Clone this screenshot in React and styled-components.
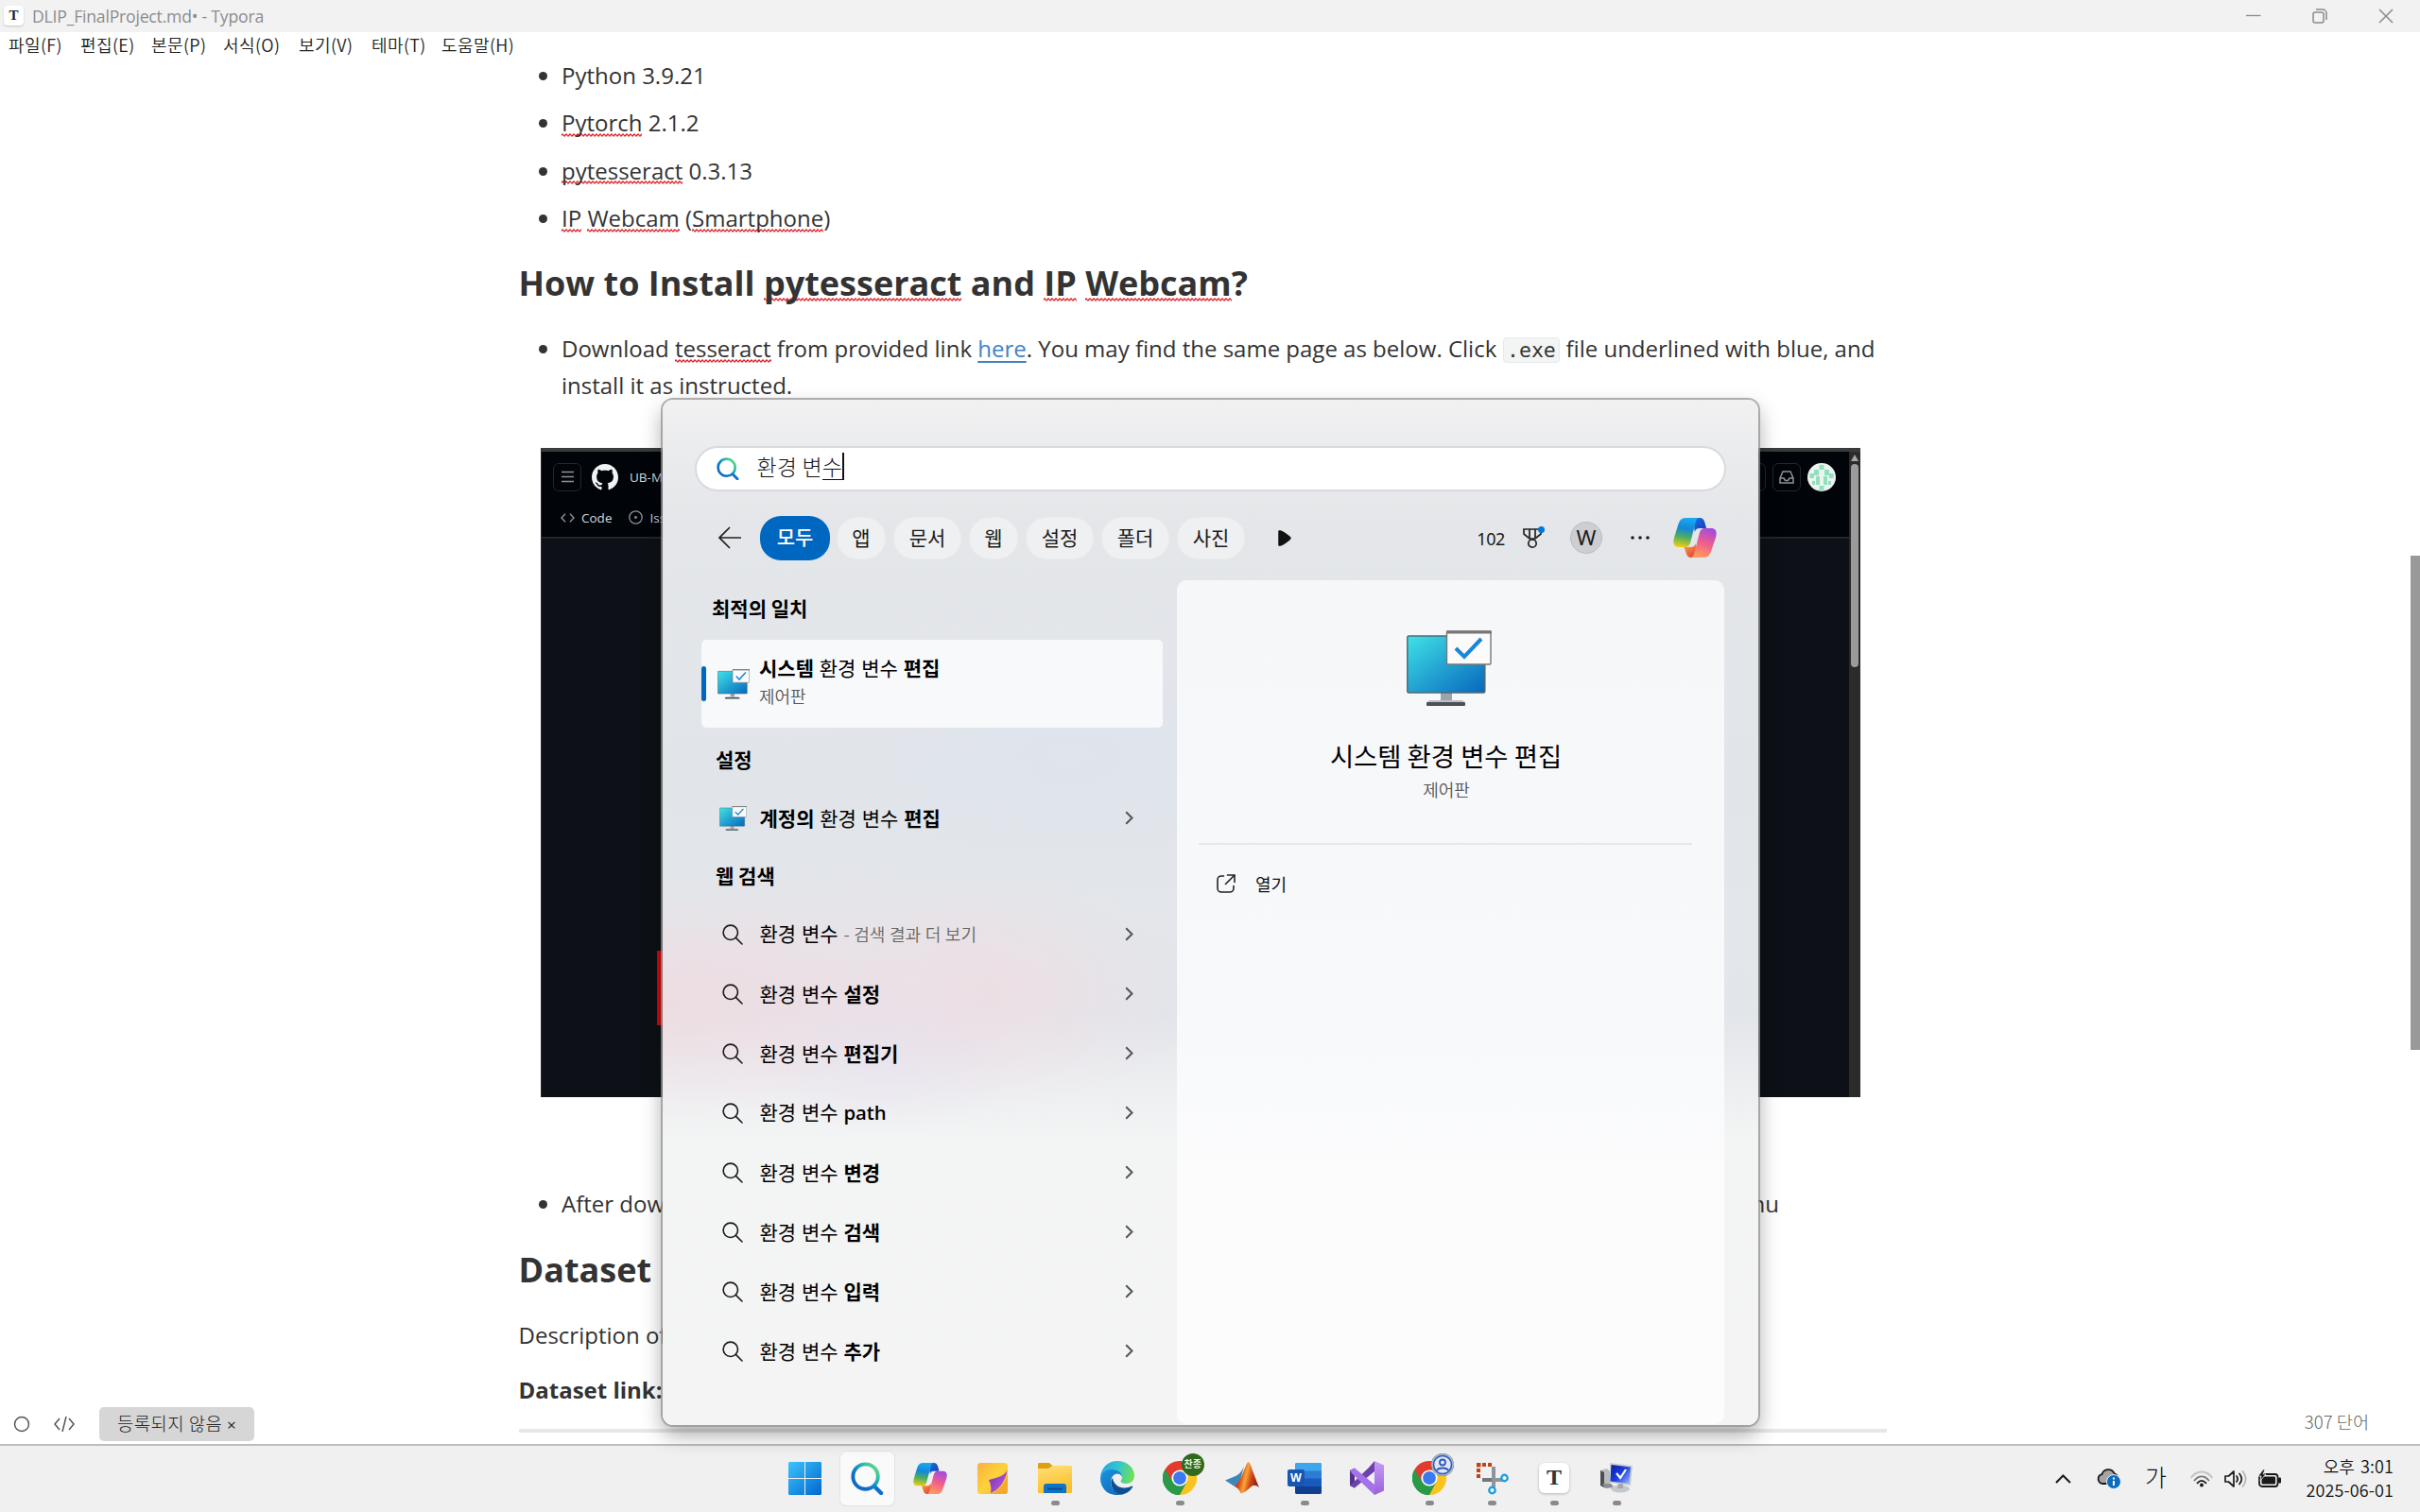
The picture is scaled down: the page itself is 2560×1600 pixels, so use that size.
import React from 'react';
import styled, { createGlobalStyle, css } from 'styled-components';

const UI = `"Noto Sans CJK KR", "Open Sans", sans-serif`;

const Global = createGlobalStyle`
  * { box-sizing: border-box; }
  html, body { margin: 0; padding: 0; overflow: hidden; }
  body { font-family: ${UI}; background: #fff; }
  svg { display: block; flex: none; }
`;

/* ---------- desktop shell ---------- */
const Desktop = styled.div`
  position: relative;
  width: 2560px;
  height: 1600px;
  display: flex;
  flex-direction: column;
  overflow: hidden;
  background: #fff;
`;

const TitleBar = styled.div`
  flex: none;
  height: 34px;
  background: #f2f2f2;
  display: flex;
  align-items: center;
  padding: 0 28px 1px 4px;
`;
const TitleIcon = styled.div`
  width: 21px;
  height: 21px;
  border-radius: 4px;
  background: #fff;
  box-shadow: 0 1px 2px rgba(0, 0, 0, 0.2);
  font: bold 15px/21px "Liberation Serif", serif;
  text-align: center;
  color: #222;
`;
const TitleText = styled.div`
  margin-left: 9px;
  font: 17.6px/34px "Open Sans", sans-serif;
  letter-spacing: -0.2px;
  color: #8c8c8c;
`;
const WindowButtons = styled.div`
  margin-left: auto;
  display: flex;
  gap: 54px;
`;

const MenuBar = styled.div`
  flex: none;
  height: 27px;
  display: flex;
  align-items: center;
  padding-left: 9px;
`;
const MenuItem = styled.div`
  width: ${(p) => p.$w}px;
  font: 350 18px/27px ${UI};
  letter-spacing: 0.4px;
  color: #222;
  white-space: nowrap;
`;

const Editor = styled.div`
  flex: 1;
  min-height: 0;
  position: relative;
  overflow: hidden;
`;
const Page = styled.div`
  width: 1447px;
  margin-left: 548.5px;
  font: 24px/38.8px "Open Sans", "Noto Sans CJK KR", sans-serif;
  color: #333;
`;
const List = styled.ul`
  margin: 0;
  padding: 0 0 0 45.5px;
  list-style: none;
`;
const Item = styled.li`
  position: relative;
  margin-bottom: ${(p) => (p.$last ? 0 : 11.6)}px;
  white-space: nowrap;
  &::before {
    content: '';
    position: absolute;
    left: -24px;
    top: 15px;
    width: 9px;
    height: 9px;
    border-radius: 50%;
    background: #333;
  }
`;
const SplitItem = styled(Item)`
  width: 1288px;
  display: flex;
  justify-content: space-between;
`;
const Heading = styled.h3`
  margin: ${(p) => p.$top}px 0 24px;
  font: bold 36px/52px "Open Sans", sans-serif;
  white-space: nowrap;
`;
const Para = styled.p`
  margin: 0 0 ${(p) => (p.$bold ? 21 : 19)}px;
  font-weight: ${(p) => (p.$bold ? 700 : 400)};
`;
const Typo = styled.span`
  background: url("data:image/svg+xml,%3Csvg xmlns='http://www.w3.org/2000/svg' width='4' height='3.500' viewBox='0 0 4 3.500'%3E%3Cpath d='M-1 3.400L1 .9 3 2.900 5 .4' transform='translate(0 -.2)' fill='none' stroke='%23e01b22' stroke-width='1.100'/%3E%3C/svg%3E")
    repeat-x 0 calc(1.069em + 2px) / 4px 3.5px;
`;
const Link = styled.a`
  color: #4183c4;
  text-decoration: underline;
  text-underline-offset: 4px;
  text-decoration-thickness: 2px;
`;
const Code = styled.code`
  font: 21.5px/24px "DejaVu Sans Mono", "Liberation Mono", monospace;
  background: #f3f4f4;
  border: 1px solid #e7eaed;
  border-radius: 4px;
  padding: 0 3.5px;
`;
const Rule = styled.div`
  height: 4px;
  margin-top: 6px;
  background: #e7e7e7;
`;
const PageScroll = styled.div`
  position: absolute;
  right: 0;
  top: 527px;
  width: 10px;
  height: 523px;
  background: #999;
`;

/* ---------- embedded dark web page ---------- */
const Shot = styled.div`
  width: 1396px;
  height: 687px;
  margin: 46px 0 94.500px 23.500px;
  display: flex;
  border-top: 4px solid #3a3b3d;
  border-left: 1px solid #2a2d31;
  background: #0d1117;
`;
const ShotMain = styled.div`
  flex: 1;
  display: flex;
  flex-direction: column;
`;
const ShotHead = styled.div`
  height: 92px;
  background: #010409;
  border-bottom: 2px solid #22262d;
  padding: 12px 14px 0 12px;
  color: #d5d9de;
  font: 500 13.500px/16px "Open Sans", sans-serif;
`;
const ShotRow = styled.div`
  display: flex;
  align-items: center;
  height: ${(p) => p.$h}px;
  gap: ${(p) => p.$gap || 0}px;
  padding-left: ${(p) => p.$pad || 0}px;
  margin-top: ${(p) => p.$mt || 0}px;
`;
const ShotButton = styled.div`
  width: 30px;
  height: 30px;
  border: 1px solid #23272e;
  border-radius: 6px;
  display: flex;
  align-items: center;
  justify-content: center;
  margin-left: ${(p) => (p.$end ? 'auto' : 0)};
`;
const ShotScroll = styled.div`
  width: 12px;
  background: #2b2b2c;
  display: flex;
  flex-direction: column;
  align-items: center;
  padding-top: 3px;
`;
const ShotThumb = styled.div`
  margin-top: 3px;
  width: 8px;
  height: 215px;
  border-radius: 4px;
  background: #9b9b9b;
`;
const RedMark = styled.div`
  width: 20px;
  height: 79px;
  margin: 436px 0 0 122px;
  background: #d0060b;
`;

/* ---------- status bar ---------- */
const StatusBar = styled.div`
  position: absolute;
  left: 0;
  right: 0;
  bottom: 0;
  height: 43px;
  display: flex;
  align-items: center;
  padding: 0 54px 0 14px;
  font: 300 18.800px/34px ${UI};
  color: #444;
`;
const Pill = styled.div`
  width: 164px;
  height: 36px;
  margin: 0 0 0 26px;
  border-radius: 5px;
  background: #d6d6d6;
  color: #222;
  letter-spacing: 0.500px;
  text-align: center;
  white-space: nowrap;
  span { font-family: "Open Sans", sans-serif; font-weight: 400; font-size: 17px; }
`;
const Words = styled.div`
  margin-left: auto;
  font-size: 18.600px;
  color: #666;
  margin-top: -5px;
`;

/* ---------- search flyout ---------- */
const Flyout = styled.div`
  position: absolute;
  left: 701px;
  top: 423px;
  width: 1159px;
  height: 1085px;
  border-radius: 11px;
  overflow: hidden;
  box-shadow: 0 0 0 2px rgba(150, 150, 150, 0.75), 0 10px 22px rgba(0, 0, 0, 0.35);
  background:
    radial-gradient(ellipse 240px 120px at 0px 640px, rgba(248, 210, 214, 0.35), transparent),
    radial-gradient(ellipse 150px 120px at 350px 625px, rgba(246, 216, 219, 0.3), transparent),
    radial-gradient(ellipse 400px 135px at 200px 625px, rgba(240, 222, 229, 0.6), transparent),
    radial-gradient(ellipse 140px 90px at 240px 690px, rgba(226, 222, 244, 0.4), transparent),
    radial-gradient(ellipse 260px 130px at 430px 375px, rgba(220, 226, 241, 0.4), transparent),
    linear-gradient(180deg, #f1f1f1 0, #ebecee 50px, #e4e6e9 130px, #e1e5ea 400px, #e3e6ea 560px, #e2e5ea 650px, #ebecef 710px, #f3f4f4 780px, #f4f4f4 1085px);
  padding: 50.5px 36px 0 35px;
`;
const SearchBox = styled.div`
  height: 44px;
  margin-left: 1px;
  width: 1087px;
  border-radius: 22px;
  background: #fff;
  box-shadow: 0 0 0 2px #d9dadd;
  display: flex;
  align-items: center;
  padding-left: 21px;
`;
const Query = styled.div`
  margin: -5px 0 0 18.5px;
  font: 300 23px/28px ${UI};
  word-spacing: 0.7px;
  color: #111;
  display: flex;
  white-space: pre;
`;
const Composing = styled.span`
  border-bottom: 1.5px solid #111;
  border-right: 2px solid #111;
`;
const Tabs = styled.div`
  display: flex;
  align-items: center;
  height: 47px;
  margin-top: 28px;
  padding-left: 23px;
`;
const Tab = styled.div`
  width: ${(p) => p.$w}px;
  height: 45px;
  margin-right: 8px;
  border-radius: 22px;
  background: #eff0f1;
  border: 1px solid #ebecee;
  color: #1a1a1a;
  font: 400 21px/40px ${UI};
  text-align: center;
  ${(p) =>
    p.$on &&
    css`
      height: 47px;
      margin-right: 7px;
      border: 0;
      line-height: 43px;
      background: #0067c0;
      color: #fff;
      font-weight: 500;
    `}
`;
const Spacer = styled.div`
  width: ${(p) => p.$w}px;
  flex: none;
`;
const Points = styled.div`
  margin-left: auto;
  font: 18px/24px "Noto Sans", sans-serif;
  letter-spacing: -0.4px;
  color: #1a1a1a;
  padding-top: 1px;
`;
const Avatar = styled.div`
  width: 34px;
  height: 34px;
  margin: 0 29px 0 27px;
  border-radius: 50%;
  background: #cdced1;
  border: 1.5px solid #bcbdc0;
  font: 22.5px/31px "Noto Sans", sans-serif;
  text-align: center;
  color: #1a1a1a;
`;
const Columns = styled.div`
  display: flex;
  margin-top: 21.5px;
  height: 893px;
`;
const Results = styled.div`
  width: 509px;
  flex: none;
  padding-left: 6px;
`;
const GroupTitle = styled.div`
  height: ${(p) => p.$h}px;
  padding-left: ${(p) => p.$pad}px;
  font: 700 21px/${(p) => p.$line}px ${UI};
  color: #000;
`;
const BestMatch = styled.div`
  width: 488px;
  height: 93px;
  border-radius: 5px;
  background: #f8f9fb;
  display: flex;
  align-items: center;
`;
const Accent = styled.div`
  width: 5px;
  height: 37px;
  border-radius: 3px;
  background: #0067c0;
`;
const Label = styled.div`
  font: 400 21px/28px ${UI};
  word-spacing: 1.1px;
  margin-top: -2px;
  color: #000;
  white-space: pre;
  b { font-weight: 700; }
  small { font-size: 18px; color: #666; font-weight: 350; word-spacing: 0.6px; }
`;
const Latin = styled.b`
  && { font-family: "Open Sans", sans-serif; font-weight: 600; font-size: 20.3px; }
`;
const Sub = styled.div`
  font: 350 18px/26px ${UI};
  color: #555;
`;
const BestText = styled.div`
  margin: -4px 0 0 10px;
  ${Sub} { margin-top: 3px; }
`;
const Row = styled.div`
  height: 63px;
  width: 488px;
  display: flex;
  align-items: center;
  padding: 0 31px 0 19px;
  & > :last-child { margin-left: auto; }
`;
const RowIcon = styled.div`
  width: 42.5px;
  padding-left: ${(p) => p.$pad || 0}px;
  flex: none;
`;
const Details = styled.div`
  width: 579px;
  border-radius: 10px;
  background: linear-gradient(180deg, #f6f7f9 0, #f8f9fb 480px, #fcfcfd 640px, #fcfcfc 100%);
  display: flex;
  flex-direction: column;
  align-items: center;
  padding-top: 53px;
  & > svg { margin-right: 3px; }
`;
const DetailsTitle = styled.div`
  margin: 31px 10px 0 0;
  font: 400 27.4px/40px ${UI};
  color: #000;
`;
const DetailsSub = styled(Sub)`
  margin: 2.5px 9px 0 0;
`;
const Divider = styled.div`
  width: 522px;
  height: 2px;
  margin: 44px 11px 0 0;
  background: #e6e7e8;
`;
const Action = styled.div`
  align-self: flex-start;
  display: flex;
  align-items: center;
  gap: 21px;
  margin: 26px 0 0 42px;
  font: 400 18px/30px ${UI};
  color: #111;
`;

/* ---------- taskbar ---------- */
const Taskbar = styled.div`
  flex: none;
  height: 72px;
  border-top: 2px solid #bdbdbd;
  background: #f0f0f1;
  display: flex;
  padding: 0 29px 0 818.5px;
  position: relative;
`;
const Slot = styled.div`
  width: 66.05px;
  height: 68px;
  display: flex;
  align-items: center;
  justify-content: center;
  position: relative;
  ${(p) =>
    p.$open &&
    css`
      &::after {
        content: '';
        position: absolute;
        left: 29px;
        bottom: 5px;
        width: 9px;
        height: 5px;
        border-radius: 3px;
        background: #8a8a8a;
      }
    `}
`;
const Active = styled.div`
  width: 57px;
  height: 57px;
  border-radius: 6px;
  background: #fafafa;
  box-shadow: 0 0 0 1px #e3e3e3, 0 1px 1px #ccc;
  display: flex;
  align-items: center;
  justify-content: center;
`;
const Badge = styled.div`
  position: absolute;
  left: 35px;
  top: 8px;
  width: 24px;
  height: 24px;
  border-radius: 50%;
  overflow: hidden;
  background: #2f6b1e;
  color: #e6f3de;
  font: 700 10px/22px ${UI};
  text-align: center;
`;
const TyporaTile = styled.div`
  width: 32px;
  height: 32px;
  border-radius: 6px;
  background: #fff;
  box-shadow: 0 1px 3px rgba(0, 0, 0, 0.25);
  font: bold 24px/31px "Liberation Serif", serif;
  color: #333;
  text-align: center;
`;
const Tray = styled.div`
  margin-left: auto;
  display: flex;
  align-items: center;
  height: 69px;
`;
const Ime = styled.div`
  margin: -5px 26px 0 25px;
  width: 22px;
  font: 300 25px/32px ${UI};
  color: #111;
`;
const Clock = styled.div`
  width: 119px;
  margin: -2px -1px 0 0;
  text-align: right;
  font: 350 18px/25px ${UI};
  letter-spacing: 0.1px;
  word-spacing: 2px;
  color: #111;
`;

/* ---------- icons ---------- */
const MonitorIcon = ({ w, h, id }) => (
  <svg width={w} height={h} viewBox="0 0 90 81" preserveAspectRatio="none">
    <defs>
      <linearGradient id={id} x1="0" y1="0" x2="1" y2="1">
        <stop offset="0" stopColor="#3fe3e6" />
        <stop offset="0.5" stopColor="#23a3d2" />
        <stop offset="1" stopColor="#0767bd" />
      </linearGradient>
    </defs>
    <rect x="36" y="66" width="12" height="10" fill="#9aa4ad" />
    <path d="M24 74h35l3 3H21z" fill="#b9c0c6" />
    <rect x="21" y="76" width="41" height="4" rx="1" fill="#4b5157" />
    <rect x="0.8" y="6" width="82" height="60" rx="1.5" fill={`url(#${id})`} stroke="#4f6b78" strokeWidth="1.5" />
    <rect x="42.500" y="1" width="46.500" height="35" rx="1" fill="#fbfbfb" stroke="#777" strokeWidth="1.4" />
    <rect x="42" y="0.500" width="48" height="3" fill="#777" />
    <path d="M52 19l9 9 18-19" fill="none" stroke="#1886d9" strokeWidth="4" />
  </svg>
);

const Lens = ({ size, stroke, w }) => (
  <svg width={size} height={size} viewBox="0 0 22 22" fill="none" stroke={stroke} strokeWidth={w} strokeLinecap="round">
    <circle cx="8.800" cy="8.800" r="7.700" />
    <path d="M14.400 14.400L21 21" />
  </svg>
);

const ColorLens = ({ size, id }) => (
  <svg width={size} height={size} viewBox="0 0 36 36" fill="none">
    <defs>
      <linearGradient id={id} x1="0.950" y1="0.050" x2="0.300" y2="0.700">
        <stop offset="0" stopColor="#66e07a" />
        <stop offset="0.350" stopColor="#33bfa6" />
        <stop offset="0.750" stopColor="#0c86cf" />
        <stop offset="1" stopColor="#0f6cc4" />
      </linearGradient>
    </defs>
    <path d="M25.500 26.500L33 34" stroke="#0f6fca" strokeWidth="4.400" strokeLinecap="round" />
    <circle cx="16" cy="16" r="13.600" stroke={`url(#${id})`} strokeWidth="4" />
  </svg>
);

const Chevron = () => (
  <svg width="9" height="15" viewBox="0 0 9 15" fill="none" stroke="#555" strokeWidth="2">
    <path d="M1.200 1.200L7.500 7.500 1.200 13.800" />
  </svg>
);

const Copilot = ({ w, h, id }) => (
  <svg width={w} height={h} viewBox="0 0 46 42" preserveAspectRatio="none">
    <defs>
      <linearGradient id={`${id}a`} x1="0.400" y1="0" x2="0.250" y2="1">
        <stop offset="0" stopColor="#18a8f0" />
        <stop offset="0.350" stopColor="#1587d8" />
        <stop offset="0.650" stopColor="#4fb05c" />
        <stop offset="1" stopColor="#f9cc12" />
      </linearGradient>
      <linearGradient id={`${id}b`} x1="0.700" y1="0" x2="0.400" y2="1">
        <stop offset="0" stopColor="#a04be0" />
        <stop offset="0.500" stopColor="#ef5d8e" />
        <stop offset="1" stopColor="#ff9a5c" />
      </linearGradient>
      <linearGradient id={`${id}c`} x1="0" y1="0" x2="1" y2="1">
        <stop offset="0" stopColor="#1279dd" />
        <stop offset="1" stopColor="#2330b8" />
      </linearGradient>
      <linearGradient id={`${id}d`} x1="0" y1="0" x2="0.600" y2="1">
        <stop offset="0" stopColor="#f7a93a" />
        <stop offset="1" stopColor="#e9473c" />
      </linearGradient>
    </defs>
    <path d="M21 0h7c3 0 4.500 2 5.300 4.600L35 11h-7c-3 0-4.400 1.600-5.200 4z" fill={`url(#${id}c)`} />
    <path d="M25 42h-6c-3 0-4.500-2-5.200-4.600L11.500 31h7c3 0 4.400-1.600 5.200-4z" fill={`url(#${id}d)`} />
    <path d="M27 0H13C8 0 6.200 4 5 8L1 21c-1.600 5.500-.6 10 4.800 10h6.500c3.500 0 5-2 5.900-5l5.200-20c.7-3 1.600-5.600 3.600-6z" fill={`url(#${id}a)`} />
    <path d="M19 42h13.500c5 0 6.800-4 8-8L45 21c1.600-5.500.6-10-4.800-10h-6.500c-3.500 0-5 2-5.900 5L22.600 36c-.7 3-1.600 5.600-3.600 6z" fill={`url(#${id}b)`} />
  </svg>
);

const Windows = () => (
  <svg width="35" height="35" viewBox="0 0 35 35">
    <defs>
      <linearGradient id="win" gradientUnits="userSpaceOnUse" x1="0" y1="0" x2="35" y2="35">
        <stop offset="0" stopColor="#3cc4fb" />
        <stop offset="1" stopColor="#0067cf" />
      </linearGradient>
    </defs>
    <path fill="url(#win)" d="M1 0h16v17H0V1zM18 0h16l1 1v16H18zM0 18h17v17H1l-1-1zM18 18h17v16l-1 1H18z" />
  </svg>
);

const StickyNote = () => (
  <svg width="32" height="33" viewBox="0 0 32 33">
    <defs>
      <linearGradient id="st1" x1="0" y1="0" x2="1" y2="1">
        <stop offset="0" stopColor="#fbb040" />
        <stop offset="0.500" stopColor="#fdd23a" />
        <stop offset="1" stopColor="#f9b52c" />
      </linearGradient>
      <linearGradient id="st2" x1="0" y1="0" x2="1" y2="1">
        <stop offset="0" stopColor="#7d2fb8" />
        <stop offset="1" stopColor="#b660e0" />
      </linearGradient>
    </defs>
    <rect width="32" height="33" rx="3.500" fill="url(#st1)" />
    <path d="M31.500 8c-4 6-8 7-19.500 10 2 4 3 9 2 14 8-3 15.500-12 17.500-24z" fill="url(#st2)" />
    <path d="M14 33c8-3 16-11 18-22v18.500a3.500 3.500 0 0 1-3.500 3.500z" fill="#f4a92c" />
  </svg>
);

const Folder = () => (
  <svg width="36" height="33" viewBox="0 0 36 33">
    <defs>
      <linearGradient id="fo" x1="0" y1="0" x2="0.300" y2="1">
        <stop offset="0" stopColor="#ffe07a" />
        <stop offset="1" stopColor="#fbc02a" />
      </linearGradient>
    </defs>
    <path d="M0 1.500C0 .6.600 0 1.500 0H12l4 3.500-4 4H0z" fill="#dca010" />
    <path d="M0 6h11l4.500-3H34.500c.9 0 1.500.6 1.500 1.500V32H0z" fill="url(#fo)" />
    <path d="M6 32v-7c0-2 1-3 3-3h18c2 0 3 1 3 3v7z" fill="#1173c8" />
    <path d="M11 27.500h14" stroke="#0a4f96" strokeWidth="2" strokeLinecap="round" />
  </svg>
);

const Edge = () => (
  <svg width="36" height="36" viewBox="0 0 36 36">
    <defs>
      <linearGradient id="ed1" x1="0" y1="0.300" x2="1" y2="0.500">
        <stop offset="0" stopColor="#2aa5e6" />
        <stop offset="0.500" stopColor="#33c6cf" />
        <stop offset="1" stopColor="#6fe052" />
      </linearGradient>
      <linearGradient id="ed2" x1="0" y1="0" x2="0.700" y2="1">
        <stop offset="0" stopColor="#1c94de" />
        <stop offset="1" stopColor="#0f6cbf" />
      </linearGradient>
    </defs>
    <path d="M0 17C1 7 8 0 18 0c10.500 0 18 7.500 18 15.500 0 5-4 8.500-8.500 8.500-4 0-6-1.400-6-2.600 0-1 1.500-1.600 1.500-4.400 0-3-2.600-5.500-6-5.500C9 11.500 2 13 0 17z" fill="url(#ed1)" />
    <path d="M0 18C1 12 7 9 12 9c7 0 11 4 11 8-1-2.500-3-3.500-5-3.500-4 0-7 4-7 9 0 6 5 12.500 10 13.400C8 37.500 0 29 0 18z" fill="url(#ed2)" />
    <path d="M11.500 20c-1.500 7 4 15.800 10 15.800 5.500-.6 10-3.600 12.600-8 .5-.9-.3-1.500-1.200-1C24 30.800 14.500 27.500 13 18z" fill="#0d4f96" />
  </svg>
);

const Chrome = () => (
  <svg width="36" height="36" viewBox="0 0 36 36">
    <path d="M18 18L2.400 9A18 18 0 0 1 33.600 9z" fill="#e33b2e" />
    <path d="M18 18L33.600 9A18 18 0 0 1 18 36z" fill="#fcc31e" />
    <path d="M18 18L18 36A18 18 0 0 1 2.400 9z" fill="#2a9a48" />
    <path d="M18 9.500H33.800L25.500 22.500z" fill="#fcc31e" />
    <path d="M10.500 22.200L2.400 9 18 9.500z" fill="#e33b2e" />
    <path d="M2.400 9L11 23.500 18 26 25.500 22.200 18 36A18 18 0 0 1 2.400 9z" fill="#2a9a48" />
    <circle cx="18" cy="18" r="8.600" fill="#fff" />
    <circle cx="18" cy="18" r="6.900" fill="#3a7af0" />
  </svg>
);

const Matlab = () => (
  <svg width="36" height="34" viewBox="0 0 36 34">
    <defs>
      <linearGradient id="ma" x1="0" y1="0" x2="1" y2="0.300">
        <stop offset="0" stopColor="#7c1f12" />
        <stop offset="0.350" stopColor="#d8481a" />
        <stop offset="0.550" stopColor="#f8a63a" />
        <stop offset="0.750" stopColor="#d24a17" />
        <stop offset="1" stopColor="#8f2413" />
      </linearGradient>
    </defs>
    <path d="M0 19.500l11-4.500c4-1.500 7-6 9-10l-5 17.500-5 3.500z" fill="#3d87b9" />
    <path d="M10 26c5-4 9-15 12-22 1.500-4 3-5 4.500-2C29 9 33 20 36 27c-3-2-5-3-7.500-1.500C24 29 22 32 17 33.500c-2-3-3-6-7-7.500z" fill="url(#ma)" />
  </svg>
);

const WordTile = styled.div`
  position: relative;
  width: 36px;
  height: 33px;
`;
const WordLetter = styled.div`
  position: absolute;
  left: 0;
  top: 7px;
  width: 18px;
  height: 18px;
  border-radius: 2px;
  background: #1757b3;
  color: #fff;
  font: bold 12.5px/18px "Liberation Sans", sans-serif;
  text-align: center;
`;
const Word = () => (
  <WordTile>
    <svg width="36" height="33" viewBox="0 0 36 33">
      <rect x="8" y="0" width="28" height="33" rx="2" fill="#2b7cd3" />
      <path d="M8 2a2 2 0 0 1 2-2h24a2 2 0 0 1 2 2v6.500H8z" fill="#41a5ee" />
      <path d="M8 16.500h28V25H8z" fill="#185abd" />
      <path d="M8 25h28v6a2 2 0 0 1-2 2H10a2 2 0 0 1-2-2z" fill="#103f91" />
    </svg>
    <WordLetter>W</WordLetter>
  </WordTile>
);

const VisualStudio = () => (
  <svg width="36" height="36" viewBox="0 0 36 36">
    <defs>
      <linearGradient id="vs" x1="0" y1="0" x2="0" y2="1">
        <stop offset="0" stopColor="#c79bf5" />
        <stop offset="1" stopColor="#9a62dc" />
      </linearGradient>
    </defs>
    <path d="M0 10l5-2.500v21L0 26z" fill="#55308c" />
    <path d="M26 0v11L5 28.500 0 26 20 7z" fill="#6d42ad" />
    <path d="M0 10l5-2.500L26 25v11L2 13z" fill="#a672e8" />
    <path d="M26 0l10 4.500v27L26 36z" fill="url(#vs)" />
  </svg>
);

const Snip = () => (
  <svg width="35" height="35" viewBox="0 0 35 35">
    <g fill="#c2421a">
      <path d="M1 1h4.500v4.500H1zM7 1h4v4H7zM13 1h4v4h-4zM1 7h4v4H1zM1 13h4v4H1z" />
    </g>
    <path d="M19 5v22M7 19h22" stroke="#8d949b" strokeWidth="4" />
    <path d="M7 17h10v4H7z" fill="#70777e" />
    <circle cx="30.500" cy="17" r="3.200" fill="#fff" stroke="#1e9fe0" strokeWidth="2.400" />
    <circle cx="17.500" cy="30" r="3.200" fill="#fff" stroke="#1e9fe0" strokeWidth="2.400" />
  </svg>
);

const OldPc = () => (
  <svg width="36" height="32" viewBox="0 0 36 32">
    <defs>
      <linearGradient id="pc" x1="0" y1="0" x2="1" y2="0.800">
        <stop offset="0" stopColor="#0a1d9a" />
        <stop offset="0.550" stopColor="#1c3fe0" />
        <stop offset="1" stopColor="#8aa6f5" />
      </linearGradient>
    </defs>
    <path d="M1 8l7-2 3 3v15l-6 2-4-2z" fill="#b8bcbf" />
    <path d="M1 8l4 2v16l-4-2z" fill="#4b4f52" />
    <path d="M3 22h9l4 4-10 1z" fill="#8a8e91" />
    <path d="M11 0l24 3-2 21-22-3z" fill="#c9cdd1" />
    <path d="M12.500 2l20.500 2.500-1.600 17.500L11.500 19.500z" fill="url(#pc)" />
    <path d="M18 11l4 5 6-9" fill="none" stroke="#fff" strokeWidth="2.200" />
    <ellipse cx="22" cy="27.500" rx="10" ry="4" fill="#c4c8cc" />
    <path d="M20 22h5v5h-6z" fill="#a4a8ab" />
  </svg>
);

const ProfileBadge = () => (
  <svg width="24" height="24" viewBox="0 0 24 24" fill="none">
    <circle cx="12" cy="12" r="12" fill="#a9b5d6" />
    <circle cx="12" cy="12" r="9.500" stroke="#2f58b8" strokeWidth="1.600" fill="#dfe6f7" />
    <circle cx="12" cy="9.500" r="3" stroke="#2f58b8" strokeWidth="1.800" />
    <path d="M6 18c1.500-3.500 10.500-3.500 12 0" stroke="#2f58b8" strokeWidth="2" />
  </svg>
);

const GitHubMark = () => (
  <svg width="28" height="28" viewBox="0 0 16 16" fill="#f0f3f6">
    <path d="M8 0C3.580 0 0 3.580 0 8c0 3.540 2.290 6.530 5.470 7.590.4.070.55-.17.55-.38 0-.19-.01-.82-.01-1.490-2.010.37-2.530-.49-2.690-.94-.09-.23-.48-.94-.82-1.130-.28-.15-.68-.52-.01-.53.63-.01 1.080.58 1.230.82.72 1.210 1.870.87 2.330.66.07-.52.28-.87.51-1.070-1.780-.2-3.640-.89-3.640-3.950 0-.87.31-1.590.82-2.150-.08-.2-.36-1.020.08-2.120 0 0 .67-.21 2.200.82.64-.18 1.320-.27 2-.27s1.360.09 2 .27c1.530-1.040 2.200-.82 2.200-.82.44 1.100.16 1.920.08 2.120.51.56.82 1.270.82 2.150 0 3.070-1.870 3.750-3.650 3.950.29.25.54.73.54 1.480 0 1.070-.01 1.930-.01 2.200 0 .21.15.46.55.38A8.010 8.010 0 0 0 16 8c0-4.420-3.580-8-8-8z" />
  </svg>
);

const suggestions = ['설정', '편집기', 'path', '변경', '검색', '입력', '추가'];
const tabs = [
  ['앱', 52],
  ['문서', 72],
  ['웹', 52],
  ['설정', 72],
  ['폴더', 72],
  ['사진', 72],
];
const menus = [
  ['파일(F)', 76],
  ['편집(E)', 75],
  ['본문(P)', 76],
  ['서식(O)', 80],
  ['보기(V)', 77],
  ['테마(T)', 74],
  ['도움말(H)', 90],
];

function WebShot() {
  return (
    <Shot>
      <ShotMain>
        <ShotHead>
          <ShotRow $h={30}>
            <ShotButton>
              <svg width="13" height="13" viewBox="0 0 13 13" stroke="#8b929a" strokeWidth="1.400">
                <path d="M0 1.500h13M0 6.500h13M0 11.500h13" />
              </svg>
            </ShotButton>
            <Spacer $w={11} />
            <GitHubMark />
            <Spacer $w={12} />
            UB-Mannheim
            <ShotButton $end />
            <Spacer $w={7} />
            <ShotButton>
              <svg width="16" height="14" viewBox="0 0 16 14" fill="none" stroke="#8b929a" strokeWidth="1.500">
                <path d="M1 8l3-7h8l3 7v5H1zM1 8h4l1.500 2.500h3L11 8h4" />
              </svg>
            </ShotButton>
            <Spacer $w={7} />
            <svg width="30" height="30" viewBox="0 0 30 30">
              <circle cx="15" cy="15" r="15" fill="#eef3f0" />
              <path fill="#8fe0bd" d="M12.500 2h5v5h-5zM7 7h5v6H7zM18 7h5v6h-5zM2.500 11h4.500v5H2.500zM23 11h4.500v5H23zM9 14h4v9H9zM17 14h4v9h-4zM12.500 24h5v5h-5zM5 19h3v4H5zM22 19h3v4h-3z" />
            </svg>
          </ShotRow>
          <ShotRow $h={20} $gap={7} $pad={8} $mt={18}>
            <svg width="15" height="10" viewBox="0 0 15 10" fill="none" stroke="#8b929a" strokeWidth="1.400">
              <path d="M5 .8L1 5l4 4.200M10 .8L14 5l-4 4.200" />
            </svg>
            <span>Code</span>
            <Spacer $w={4} />
            <svg width="15" height="15" viewBox="0 0 15 15" fill="none" stroke="#8b929a" strokeWidth="1.300">
              <circle cx="7.500" cy="7.500" r="6.700" />
              <circle cx="7.500" cy="7.500" r="0.800" />
            </svg>
            <span>Issues</span>
          </ShotRow>
        </ShotHead>
        <RedMark />
      </ShotMain>
      <ShotScroll>
        <svg width="8" height="7" viewBox="0 0 8 7">
          <path d="M4 0l4 7H0z" fill="#a5a5a5" />
        </svg>
        <ShotThumb />
      </ShotScroll>
    </Shot>
  );
}

function SearchFlyout() {
  return (
    <Flyout>
      <SearchBox>
        <ColorLens size={24} id="lensS" />
        <Query>
          환경 변<Composing>수</Composing>
        </Query>
      </SearchBox>
      <Tabs>
        <svg width="25" height="24" viewBox="0 0 25 24" fill="none" stroke="#222" strokeWidth="1.700">
          <path d="M13 1L2 12l11 11M2 12h23" />
        </svg>
        <Spacer $w={20} />
        <Tab $on $w={74}>모두</Tab>
        {tabs.map(([t, w]) => (
          <Tab key={t} $w={w}>{t}</Tab>
        ))}
        <Spacer $w={27} />
        <svg width="14" height="17" viewBox="0 0 14 17">
          <path d="M1 1h1.500c1 0 10.500 6 10.500 7.500S3.500 16 2.500 16H1z" fill="#111" stroke="#111" strokeWidth="1.500" strokeLinejoin="round" />
        </svg>
        <Points>102</Points>
        <Spacer $w={18} />
        <svg width="24" height="24" viewBox="0 0 24 24" fill="none" stroke="#222" strokeWidth="1.700">
          <path d="M2 3h18v5l-6 5h-6L2 8zM8 3v9M14 3v9" />
          <circle cx="11" cy="18" r="4.200" />
          <circle cx="20.500" cy="3.500" r="3.500" fill="#0078d4" stroke="none" />
        </svg>
        <Avatar>W</Avatar>
        <svg width="22" height="6" viewBox="0 0 22 6" fill="#1a1a1a">
          <circle cx="3" cy="3" r="1.800" />
          <circle cx="11" cy="3" r="1.800" />
          <circle cx="19" cy="3" r="1.800" />
        </svg>
        <Spacer $w={24} />
        <Copilot w={46} h={42} id="cpF" />
        <Spacer $w={8} />
      </Tabs>
      <Columns>
        <Results>
          <GroupTitle $h={63} $line={59} $pad={11}>최적의 일치</GroupTitle>
          <BestMatch>
            <Accent />
            <Spacer $w={12} />
            <MonitorIcon w={34} h={32} id="m1" />
            <BestText>
              <Label><b>시스템</b> 환경 변수 <b>편집</b></Label>
              <Sub>제어판</Sub>
            </BestText>
          </BestMatch>
          <GroupTitle $h={64} $line={66} $pad={15}>설정</GroupTitle>
          <Row>
            <RowIcon>
              <MonitorIcon w={29} h={26} id="m2" />
            </RowIcon>
            <Label><b>계정의</b> 환경 변수 <b>편집</b></Label>
            <Chevron />
          </Row>
          <GroupTitle $h={60} $line={59} $pad={15}>웹 검색</GroupTitle>
          <Row>
            <RowIcon $pad={2.5}><Lens size={22} stroke="#1a1a1a" w={1.6} /></RowIcon>
            <Label>환경 변수 <small>- 검색 결과 더 보기</small></Label>
            <Chevron />
          </Row>
          {suggestions.map((s) => (
            <Row key={s}>
              <RowIcon $pad={2.5}><Lens size={22} stroke="#1a1a1a" w={1.6} /></RowIcon>
              <Label>환경 변수 {s === 'path' ? <Latin>{s}</Latin> : <b>{s}</b>}</Label>
              <Chevron />
            </Row>
          ))}
        </Results>
        <Details>
          <MonitorIcon w={90} h={81} id="m3" />
          <DetailsTitle>시스템 환경 변수 편집</DetailsTitle>
          <DetailsSub>제어판</DetailsSub>
          <Divider />
          <Action>
            <svg width="20" height="20" viewBox="0 0 20 20" fill="none" stroke="#222" strokeWidth="1.600" strokeLinecap="round">
              <path d="M7.500 2H5a4 4 0 0 0-4 4v9a4 4 0 0 0 4 4h9a4 4 0 0 0 4-4v-2.500M11.500 1H19v7.500M19 1l-9.500 9.500" />
            </svg>
            열기
          </Action>
        </Details>
      </Columns>
    </Flyout>
  );
}

function TaskbarIcons() {
  return (
    <>
      <Slot><Windows /></Slot>
      <Slot><Active><ColorLens size={35} id="lensT" /></Active></Slot>
      <Slot><Copilot w={36} h={33} id="cpT" /></Slot>
      <Slot><StickyNote /></Slot>
      <Slot $open><Folder /></Slot>
      <Slot><Edge /></Slot>
      <Slot $open><Chrome /><Badge>찬종</Badge></Slot>
      <Slot><Matlab /></Slot>
      <Slot $open><Word /></Slot>
      <Slot><VisualStudio /></Slot>
      <Slot $open><Chrome /><Badge><ProfileBadge /></Badge></Slot>
      <Slot $open><Snip /></Slot>
      <Slot $open><TyporaTile>T</TyporaTile></Slot>
      <Slot $open><OldPc /></Slot>
    </>
  );
}

function SystemTray() {
  return (
    <Tray>
      <svg width="17" height="10" viewBox="0 0 17 10" fill="none" stroke="#1a1a1a" strokeWidth="2">
        <path d="M1 9l7.500-7.500L16 9" />
      </svg>
      <Spacer $w={27} />
      <svg width="26" height="22" viewBox="0 0 26 22">
        <path d="M6 16a5 5 0 0 1-.5-9.800A7 7 0 0 1 18.500 5 5 5 0 0 1 21 13l-2 3z" fill="#a5a5a5" stroke="#1a1a1a" strokeWidth="1.800" />
        <circle cx="18" cy="14" r="7.500" fill="#0f6cbd" stroke="#f0f0f1" strokeWidth="1" />
        <path d="M18 13v5M18 9.500v2" stroke="#fff" strokeWidth="2" />
      </svg>
      <Ime>가</Ime>
      <svg width="24" height="18" viewBox="0 0 24 18" fill="none" strokeWidth="1.800" strokeLinecap="round">
        <path d="M1 7.500C7-.5 17-.5 23 7.500" stroke="#c2c2c2" />
        <path d="M4.500 10.500c4.500-5.500 10.500-5.500 15 0" stroke="#777" />
        <path d="M7.500 13.300c3-3.200 6-3.200 9 0" stroke="#1a1a1a" />
        <circle cx="12" cy="15.500" r="2" fill="#1a1a1a" />
      </svg>
      <Spacer $w={12} />
      <svg width="24" height="20" viewBox="0 0 24 20" fill="none" stroke="#1a1a1a" strokeWidth="1.700" strokeLinejoin="round" strokeLinecap="round">
        <path d="M1 7h3.500L10 2v16l-5.500-5H1z" />
        <path d="M13 7c1.500 2 1.500 4 0 6M16 4.500c3 3.500 3 7.500 0 11" />
        <path d="M19.500 2c4 5 4 11 0 16" stroke="#b5b5b5" />
      </svg>
      <Spacer $w={12} />
      <svg width="24" height="20" viewBox="0 0 24 20">
        <rect x="1" y="5" width="19.500" height="13" rx="3" fill="none" stroke="#1a1a1a" strokeWidth="1.800" />
        <rect x="3.500" y="7.500" width="14.500" height="8" rx="1" fill="#1a1a1a" />
        <rect x="21" y="8.500" width="3" height="6" rx="1" fill="#1a1a1a" />
        <path d="M5 0L0 7h3l-1 5 6-7H5L7 0z" fill="#1a1a1a" stroke="#f0f0f1" strokeWidth="0.800" />
      </svg>
      <Clock>
        <div>오후 3:01</div>
        <div>2025-06-01</div>
      </Clock>
    </Tray>
  );
}

export default function App() {
  return (
    <Desktop>
      <Global />
      <TitleBar>
        <TitleIcon>T</TitleIcon>
        <TitleText>DLIP_FinalProject.md• - Typora</TitleText>
        <WindowButtons>
          <svg width="16" height="16" viewBox="0 0 16 16" stroke="#8a8a8a" strokeWidth="1.300"><path d="M0 7.500h15.500" /></svg>
          <svg width="16" height="16" viewBox="0 0 16 16" fill="none" stroke="#8a8a8a" strokeWidth="1.500">
            <rect x="1" y="4" width="11" height="11" rx="2" />
            <path d="M4 1h7a4 4 0 0 1 4 4v7" />
          </svg>
          <svg width="16" height="16" viewBox="0 0 16 16" stroke="#8a8a8a" strokeWidth="1.500"><path d="M1 1l14 14M15 1L1 15" /></svg>
        </WindowButtons>
      </TitleBar>
      <MenuBar>
        {menus.map(([m, w]) => (
          <MenuItem key={m} $w={w}>{m}</MenuItem>
        ))}
      </MenuBar>
      <Editor>
        <Page>
          <List>
            <Item>Python 3.9.21</Item>
            <Item><Typo>Pytorch</Typo> 2.1.2</Item>
            <Item><Typo>pytesseract</Typo> 0.3.13</Item>
            <Item $last><Typo>IP</Typo> <Typo>Webcam</Typo> (<Typo>Smartphone</Typo>)</Item>
          </List>
          <Heading $top={23}>
            How to Install <Typo>pytesseract</Typo> and <Typo>IP</Typo> <Typo>Webcam</Typo>?
          </Heading>
          <List>
            <Item $last>
              Download <Typo>tesseract</Typo> from provided link <Link>here</Link>. You may find the same page as below. Click <Code>.exe</Code> file underlined with blue, and
              <br />
              install it as instructed.
            </Item>
          </List>
          <WebShot />
          <List>
            <SplitItem $last>
              <span>After down</span>
              <span>menu</span>
            </SplitItem>
          </List>
          <Heading $top={24.5}>Dataset</Heading>
          <Para>Description of</Para>
          <Para $bold>Dataset link:</Para>
          <Rule />
        </Page>
        <PageScroll />
        <StatusBar>
          <svg width="18" height="18" viewBox="0 0 18 18" fill="none" stroke="#555" strokeWidth="1.500"><circle cx="9" cy="9" r="7.500" /></svg>
          <Spacer $w={25} />
          <svg width="22" height="16" viewBox="0 0 22 16" fill="none" stroke="#555" strokeWidth="1.500">
            <path d="M6 2L1 8l5 6M16 2l5 6-5 6M13 0L9 16" />
          </svg>
          <Pill>등록되지 않음 <span>×</span></Pill>
          <Words>307 단어</Words>
        </StatusBar>
      </Editor>
      <Taskbar>
        <TaskbarIcons />
        <SystemTray />
      </Taskbar>
      <SearchFlyout />
    </Desktop>
  );
}
